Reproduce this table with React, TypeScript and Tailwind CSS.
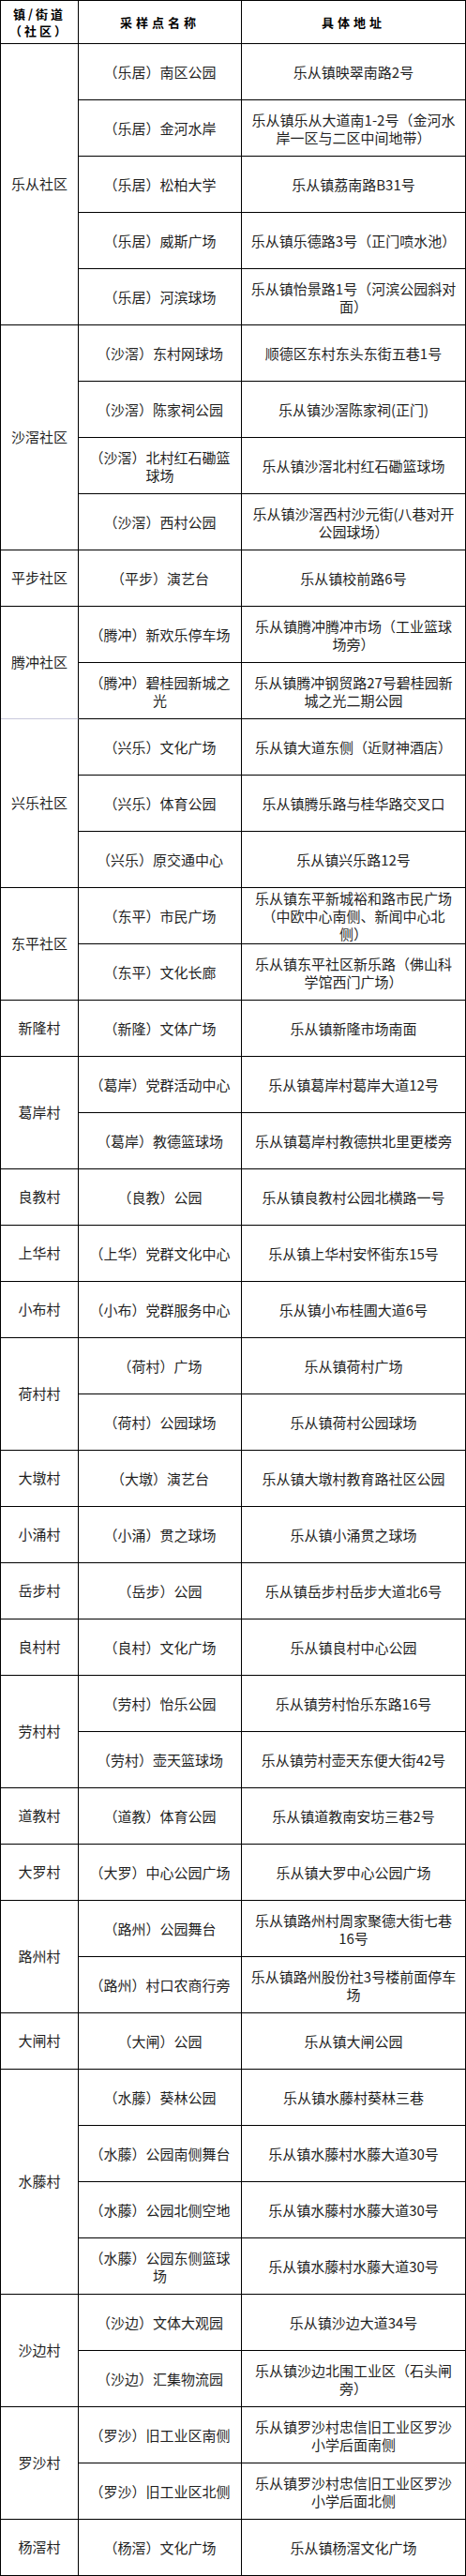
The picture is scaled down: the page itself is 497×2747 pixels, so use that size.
import { Fragment } from 'react';

type Site = { name: string[]; addr: string[] };
type Group = { area: string; sites: Site[]; softBottom?: boolean };

// one line per entry: the reference breaks lines at fixed places
const GROUPS: Group[] = [
  {
    area: '乐从社区',
    sites: [
      { name: ['（乐居）南区公园'], addr: ['乐从镇映翠南路2号'] },
      { name: ['（乐居）金河水岸'], addr: ['乐从镇乐从大道南1-2号（金河水', '岸一区与二区中间地带）'] },
      { name: ['（乐居）松柏大学'], addr: ['乐从镇荔南路B31号'] },
      { name: ['（乐居）威斯广场'], addr: ['乐从镇乐德路3号（正门喷水池）'] },
      { name: ['（乐居）河滨球场'], addr: ['乐从镇怡景路1号（河滨公园斜对', '面）'] },
    ],
  },
  {
    area: '沙滘社区',
    sites: [
      { name: ['（沙滘）东村网球场'], addr: ['顺德区东村东头东街五巷1号'] },
      { name: ['（沙滘）陈家祠公园'], addr: ['乐从镇沙滘陈家祠(正门)'] },
      { name: ['（沙滘）北村红石磡篮', '球场'], addr: ['乐从镇沙滘北村红石磡篮球场'] },
      { name: ['（沙滘）西村公园'], addr: ['乐从镇沙滘西村沙元街(八巷对开', '公园球场）'] },
    ],
  },
  { area: '平步社区', sites: [{ name: ['（平步）演艺台'], addr: ['乐从镇校前路6号'] }] },
  {
    area: '腾冲社区',
    softBottom: true,
    sites: [
      { name: ['（腾冲）新欢乐停车场'], addr: ['乐从镇腾冲腾冲市场（工业篮球', '场旁）'] },
      { name: ['（腾冲）碧桂园新城之', '光'], addr: ['乐从镇腾冲钢贸路27号碧桂园新', '城之光二期公园'] },
    ],
  },
  {
    area: '兴乐社区',
    sites: [
      { name: ['（兴乐）文化广场'], addr: ['乐从镇大道东侧（近财神酒店）'] },
      { name: ['（兴乐）体育公园'], addr: ['乐从镇腾乐路与桂华路交叉口'] },
      { name: ['（兴乐）原交通中心'], addr: ['乐从镇兴乐路12号'] },
    ],
  },
  {
    area: '东平社区',
    sites: [
      { name: ['（东平）市民广场'], addr: ['乐从镇东平新城裕和路市民广场', '（中欧中心南侧、新闻中心北', '侧）'] },
      { name: ['（东平）文化长廊'], addr: ['乐从镇东平社区新乐路（佛山科', '学馆西门广场）'] },
    ],
  },
  { area: '新隆村', sites: [{ name: ['（新隆）文体广场'], addr: ['乐从镇新隆市场南面'] }] },
  {
    area: '葛岸村',
    sites: [
      { name: ['（葛岸）党群活动中心'], addr: ['乐从镇葛岸村葛岸大道12号'] },
      { name: ['（葛岸）教德篮球场'], addr: ['乐从镇葛岸村教德拱北里更楼旁'] },
    ],
  },
  { area: '良教村', sites: [{ name: ['（良教）公园'], addr: ['乐从镇良教村公园北横路一号'] }] },
  { area: '上华村', sites: [{ name: ['（上华）党群文化中心'], addr: ['乐从镇上华村安怀街东15号'] }] },
  { area: '小布村', sites: [{ name: ['（小布）党群服务中心'], addr: ['乐从镇小布桂圃大道6号'] }] },
  {
    area: '荷村村',
    sites: [
      { name: ['（荷村）广场'], addr: ['乐从镇荷村广场'] },
      { name: ['（荷村）公园球场'], addr: ['乐从镇荷村公园球场'] },
    ],
  },
  { area: '大墩村', sites: [{ name: ['（大墩）演艺台'], addr: ['乐从镇大墩村教育路社区公园'] }] },
  { area: '小涌村', sites: [{ name: ['（小涌）贯之球场'], addr: ['乐从镇小涌贯之球场'] }] },
  { area: '岳步村', sites: [{ name: ['（岳步）公园'], addr: ['乐从镇岳步村岳步大道北6号'] }] },
  { area: '良村村', sites: [{ name: ['（良村）文化广场'], addr: ['乐从镇良村中心公园'] }] },
  {
    area: '劳村村',
    sites: [
      { name: ['（劳村）怡乐公园'], addr: ['乐从镇劳村怡乐东路16号'] },
      { name: ['（劳村）壶天篮球场'], addr: ['乐从镇劳村壶天东便大街42号'] },
    ],
  },
  { area: '道教村', sites: [{ name: ['（道教）体育公园'], addr: ['乐从镇道教南安坊三巷2号'] }] },
  { area: '大罗村', sites: [{ name: ['（大罗）中心公园广场'], addr: ['乐从镇大罗中心公园广场'] }] },
  {
    area: '路州村',
    sites: [
      { name: ['（路州）公园舞台'], addr: ['乐从镇路州村周家聚德大街七巷', '16号'] },
      { name: ['（路州）村口农商行旁'], addr: ['乐从镇路州股份社3号楼前面停车', '场'] },
    ],
  },
  { area: '大闸村', sites: [{ name: ['（大闸）公园'], addr: ['乐从镇大闸公园'] }] },
  {
    area: '水藤村',
    sites: [
      { name: ['（水藤）葵林公园'], addr: ['乐从镇水藤村葵林三巷'] },
      { name: ['（水藤）公园南侧舞台'], addr: ['乐从镇水藤村水藤大道30号'] },
      { name: ['（水藤）公园北侧空地'], addr: ['乐从镇水藤村水藤大道30号'] },
      { name: ['（水藤）公园东侧篮球', '场'], addr: ['乐从镇水藤村水藤大道30号'] },
    ],
  },
  {
    area: '沙边村',
    sites: [
      { name: ['（沙边）文体大观园'], addr: ['乐从镇沙边大道34号'] },
      { name: ['（沙边）汇集物流园'], addr: ['乐从镇沙边北围工业区（石头闸', '旁）'] },
    ],
  },
  {
    area: '罗沙村',
    sites: [
      { name: ['（罗沙）旧工业区南侧'], addr: ['乐从镇罗沙村忠信旧工业区罗沙', '小学后面南侧'] },
      { name: ['（罗沙）旧工业区北侧'], addr: ['乐从镇罗沙村忠信旧工业区罗沙', '小学后面北侧'] },
    ],
  },
  { area: '杨滘村', sites: [{ name: ['（杨滘）文化广场'], addr: ['乐从镇杨滘文化广场'] }] },
];

const SPAN: Record<number, string> = {
  1: 'row-span-1',
  2: 'row-span-2',
  3: 'row-span-3',
  4: 'row-span-4',
  5: 'row-span-5',
};

const cell = 'flex items-center justify-center text-center whitespace-nowrap border-r border-b border-black';

function Lines({ lines }: { lines: string[] }) {
  return (
    <div className="leading-[19px]">
      {lines.map((l, i) => (
        <div key={i}>{l}</div>
      ))}
    </div>
  );
}

export default function App() {
  return (
    <div className="w-[497px] bg-white font-['Noto_Sans_CJK_SC',sans-serif] text-[15px] text-[#1f1f1f]">
      <div className="grid grid-cols-[83px_174px_239px] grid-rows-[46px_repeat(45,60px)] border-t border-l border-black">
        {/* header row */}
        <div className={cell + ' text-[13px] font-bold leading-[18px] tracking-[3px] text-black'}>
          <div>
            <div>镇/街道</div>
            <div>（社区）</div>
          </div>
        </div>
        <div className={cell + ' text-[13px] font-bold tracking-[4px] text-black'}>采样点名称</div>
        <div className={cell + ' text-[13px] font-bold tracking-[4px] text-black'}>具体地址</div>

        {GROUPS.map((g) => (
          <Fragment key={g.area}>
            <div
              className={
                cell + ' col-start-1 ' + SPAN[g.sites.length] + (g.softBottom ? ' border-b-[#c9c9dc]' : '')
              }
            >
              {g.area}
            </div>
            {g.sites.map((s) => (
              <Fragment key={s.name.join('')}>
                <div className={cell + ' col-start-2'}>
                  <Lines lines={s.name} />
                </div>
                <div className={cell + ' col-start-3'}>
                  <Lines lines={s.addr} />
                </div>
              </Fragment>
            ))}
          </Fragment>
        ))}
      </div>
    </div>
  );
}
